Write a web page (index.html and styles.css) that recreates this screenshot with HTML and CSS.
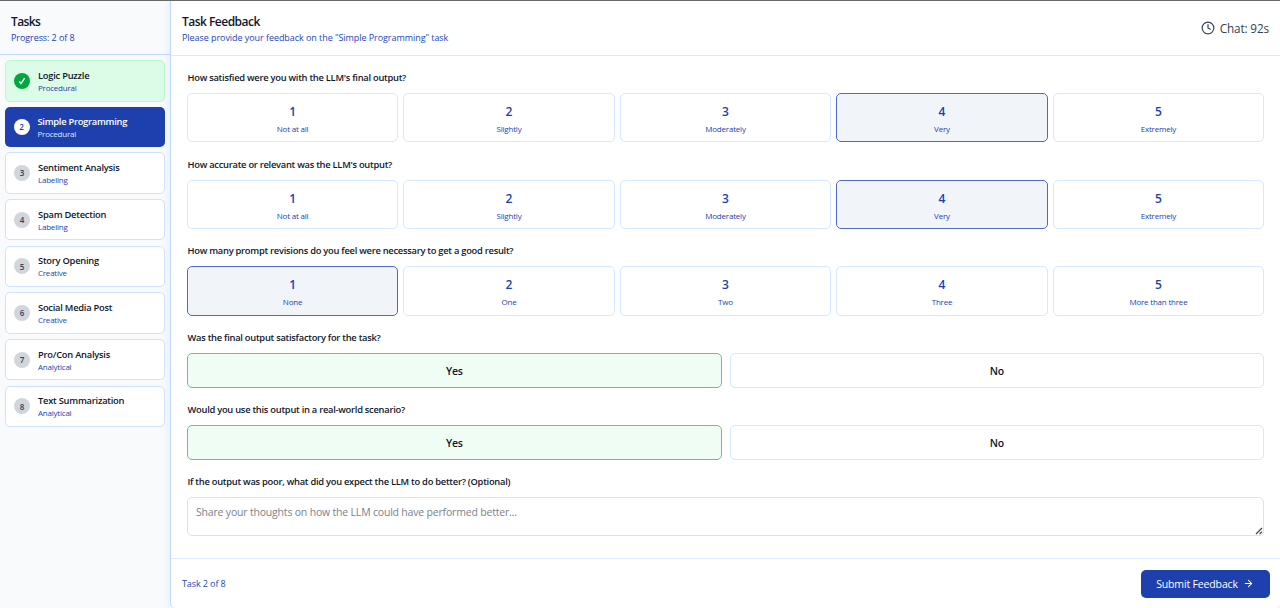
FILE: index.html
```html
<!DOCTYPE html>
<html lang="en">
<head>
<meta charset="utf-8">
<title>Task Feedback</title>
<link rel="stylesheet" href="styles.css">
</head>
<body>
<div class="app">
  <aside class="sidebar">
    <header class="side-head">
      <h2 class="side-title"><span>Tasks</span></h2>
      <p class="side-progress"><span>Progress: 2 of 8</span></p>
    </header>
    <nav class="tasks">
      <div class="task done"><span class="num"><svg viewBox="0 0 16 16" width="16" height="16"><path d="M5.4 8.5 7 10.6 10.6 5.2" fill="none" stroke="#fff" stroke-width="1.4"/></svg></span><div><div class="name">Logic Puzzle</div><div class="kind">Procedural</div></div></div>
      <div class="task active"><span class="num">2</span><div><div class="name">Simple Programming</div><div class="kind">Procedural</div></div></div>
      <div class="task"><span class="num">3</span><div><div class="name">Sentiment Analysis</div><div class="kind">Labeling</div></div></div>
      <div class="task"><span class="num">4</span><div><div class="name">Spam Detection</div><div class="kind">Labeling</div></div></div>
      <div class="task"><span class="num">5</span><div><div class="name">Story Opening</div><div class="kind">Creative</div></div></div>
      <div class="task"><span class="num">6</span><div><div class="name">Social Media Post</div><div class="kind">Creative</div></div></div>
      <div class="task"><span class="num">7</span><div><div class="name">Pro/Con Analysis</div><div class="kind">Analytical</div></div></div>
      <div class="task"><span class="num">8</span><div><div class="name">Text Summarization</div><div class="kind">Analytical</div></div></div>
    </nav>
  </aside>
  <main class="main">
    <header class="main-head">
      <div>
        <h1 class="title">Task Feedback</h1>
        <p class="subtitle">Please provide your feedback on the "Simple Programming" task</p>
      </div>
      <div class="timer"><svg viewBox="0 0 24 24" width="14" height="14" fill="none" stroke="currentColor" stroke-width="2" stroke-linecap="round" stroke-linejoin="round"><circle cx="12" cy="12" r="10"/><path d="M12 6v6l4 2"/></svg><span>Chat: 92s</span></div>
    </header>
    <form class="form">
      <section class="question">
        <div class="label">How satisfied were you with the LLM's final output?</div>
        <div class="scale">
          <div class="opt"><b>1</b><span>Not at all</span></div>
          <div class="opt"><b>2</b><span>Slightly</span></div>
          <div class="opt"><b>3</b><span>Moderately</span></div>
          <div class="opt selected"><b>4</b><span>Very</span></div>
          <div class="opt"><b>5</b><span>Extremely</span></div>
        </div>
      </section>
      <section class="question">
        <div class="label">How accurate or relevant was the LLM's output?</div>
        <div class="scale">
          <div class="opt"><b>1</b><span>Not at all</span></div>
          <div class="opt"><b>2</b><span>Slightly</span></div>
          <div class="opt"><b>3</b><span>Moderately</span></div>
          <div class="opt selected"><b>4</b><span>Very</span></div>
          <div class="opt"><b>5</b><span>Extremely</span></div>
        </div>
      </section>
      <section class="question">
        <div class="label">How many prompt revisions do you feel were necessary to get a good result?</div>
        <div class="scale">
          <div class="opt selected"><b>1</b><span>None</span></div>
          <div class="opt"><b>2</b><span>One</span></div>
          <div class="opt"><b>3</b><span>Two</span></div>
          <div class="opt"><b>4</b><span>Three</span></div>
          <div class="opt"><b>5</b><span>More than three</span></div>
        </div>
      </section>
      <section class="question">
        <div class="label">Was the final output satisfactory for the task?</div>
        <div class="binary"><div class="choice yes">Yes</div><div class="choice">No</div></div>
      </section>
      <section class="question">
        <div class="label">Would you use this output in a real-world scenario?</div>
        <div class="binary"><div class="choice yes">Yes</div><div class="choice">No</div></div>
      </section>
      <section class="question">
        <div class="label">If the output was poor, what did you expect the LLM to do better? (Optional)</div>
        <div class="comment"><span>Share your thoughts on how the LLM could have performed better...</span><svg class="grip" viewBox="0 0 8 8" width="8" height="8"><path d="M1 7 7 1M4.6 7 7 4.6" stroke="#444" stroke-width="1.2" fill="none"/></svg></div>
      </section>
    </form>
    <footer class="foot">
      <span class="count">Task 2 of 8</span>
      <button class="submit" type="button"><span>Submit Feedback</span><svg viewBox="0 0 24 24" width="11" height="11" fill="none" stroke="currentColor" stroke-width="2.2" stroke-linecap="round" stroke-linejoin="round"><path d="M5 12h14M12 5l7 7-7 7"/></svg></button>
    </footer>
  </main>
</div>
</body>
</html>
```
FILE: styles.css
```css
* { box-sizing: border-box; }
body { margin: 0; font-family: "Open Sans", "Noto Sans", sans-serif; background: #f8fafc; color: #0f172b; }
h1, h2, p { margin: 0; }
.app { display: flex; width: 1280px; height: 608px; border-top: 1px solid #686868; overflow: hidden; }

.sidebar { width: 170px; flex: none; background: #f8fafc; }
.side-head { height: 54px; padding: 12px 11px 0; border-bottom: 1px solid #bedbff; }
.side-title { font-size: 12px; line-height: 17px; font-weight: 600; letter-spacing: -0.6px; }
.side-progress { font-size: 9px; line-height: 15px; color: #1c3fb0; letter-spacing: -0.08px; }
.tasks { display: flex; flex-direction: column; gap: 5.33px; padding: 5.33px 5px; }
.task { display: flex; align-items: center; height: 41.33px; padding: 0 8px; gap: 8px; border: 1px solid #cfe3ff; border-radius: 5px; background: #fff; }
.task.done { background: #dcfce7; border-color: #b9f8cf; }
.task.active { height: 40px; border: 0; padding-left: 8.5px; background: #1e3fae; color: #fff; }
.num { display: flex; align-items: center; justify-content: center; width: 16px; height: 16px; flex: none; border-radius: 50%; background: #d1d5dc; color: #364153; font-size: 8px; font-weight: 600; }
.done .num { background: #00a63e; }
.active .num { background: #fff; color: #1e3fae; }
.name { font-size: 9.33px; line-height: 13px; font-weight: 600; letter-spacing: -0.24px; }
.kind { font-size: 8px; line-height: 11px; color: #1c3fb0; letter-spacing: -0.22px; }
.active .name { letter-spacing: -0.27px; }
.active .kind { color: #dbeafe; }

.main { flex: 1; display: flex; flex-direction: column; border-left: 1px solid #bedbff; border-radius: 0 0 5px 5px; background: #fff; box-shadow: 0 0 8px rgba(30, 64, 175, .1); }
.main-head { height: 55px; flex: none; display: flex; justify-content: space-between; padding: 12px 11px 0; border-bottom: 1px solid #dbeafe; }
.title { font-size: 12px; line-height: 18px; font-weight: 600; letter-spacing: -0.52px; }
.subtitle { font-size: 9px; line-height: 14px; color: #2547b8; letter-spacing: -0.06px; }
.timer { display: flex; align-items: center; gap: 5px; height: 30px; color: #314158; font-size: 11.7px; font-weight: 500; letter-spacing: -0.1px; }
.form { flex: 1; display: flex; flex-direction: column; gap: 12.33px; padding: 12px 16px 0; }
.question { display: flex; flex-direction: column; gap: 5px; }
.label { height: 20px; padding-left: 0.5px; line-height: 20.4px; font-size: 9.33px; font-weight: 600; letter-spacing: -0.26px; white-space: nowrap; }
.scale { display: grid; grid-template-columns: repeat(5, 1fr); gap: 5.33px; }
.opt { height: 49.33px; display: flex; flex-direction: column; align-items: center; padding-top: 9px; border: 1px solid #d6e8ff; border-radius: 5px; color: #1c3fb0; }
.opt b { font-size: 12px; line-height: 18px; font-weight: 600; }
.opt span { font-size: 8px; line-height: 15px; letter-spacing: -0.2px; }
.opt.selected { background: #f1f5f9; border-color: #5068c8; }
.binary { display: grid; grid-template-columns: 1fr 1fr; gap: 8px; }
.choice { height: 34.67px; display: flex; align-items: center; justify-content: center; padding-top: 1px; border: 1px solid #d6e8ff; border-radius: 5px; font-size: 10.5px; font-weight: 600; letter-spacing: -0.25px; }
.choice.yes { background: #f0fdf4; border-color: #48d57f; }
.comment { position: relative; height: 39px; padding: 5px 8px; border: 1px solid #d0e4ff; border-radius: 5px; color: #7c828e; font-size: 10.5px; line-height: 18px; letter-spacing: -0.19px; }
.grip { position: absolute; right: 0; bottom: 0; }
.foot { height: 50px; flex: none; display: flex; align-items: center; justify-content: space-between; padding: 0 10.5px 0 11px; border-top: 1px solid #dbeafe; }
.count { font-size: 9px; letter-spacing: -0.1px; color: #2547b8; }
.submit { display: flex; align-items: center; justify-content: center; gap: 5px; width: 129px; height: 28px; padding: 0; border: 0; border-radius: 5px; background: #1e3fae; color: #fff; font: 400 10.5px "Open Sans", "Noto Sans", sans-serif; letter-spacing: -0.15px; }
```
